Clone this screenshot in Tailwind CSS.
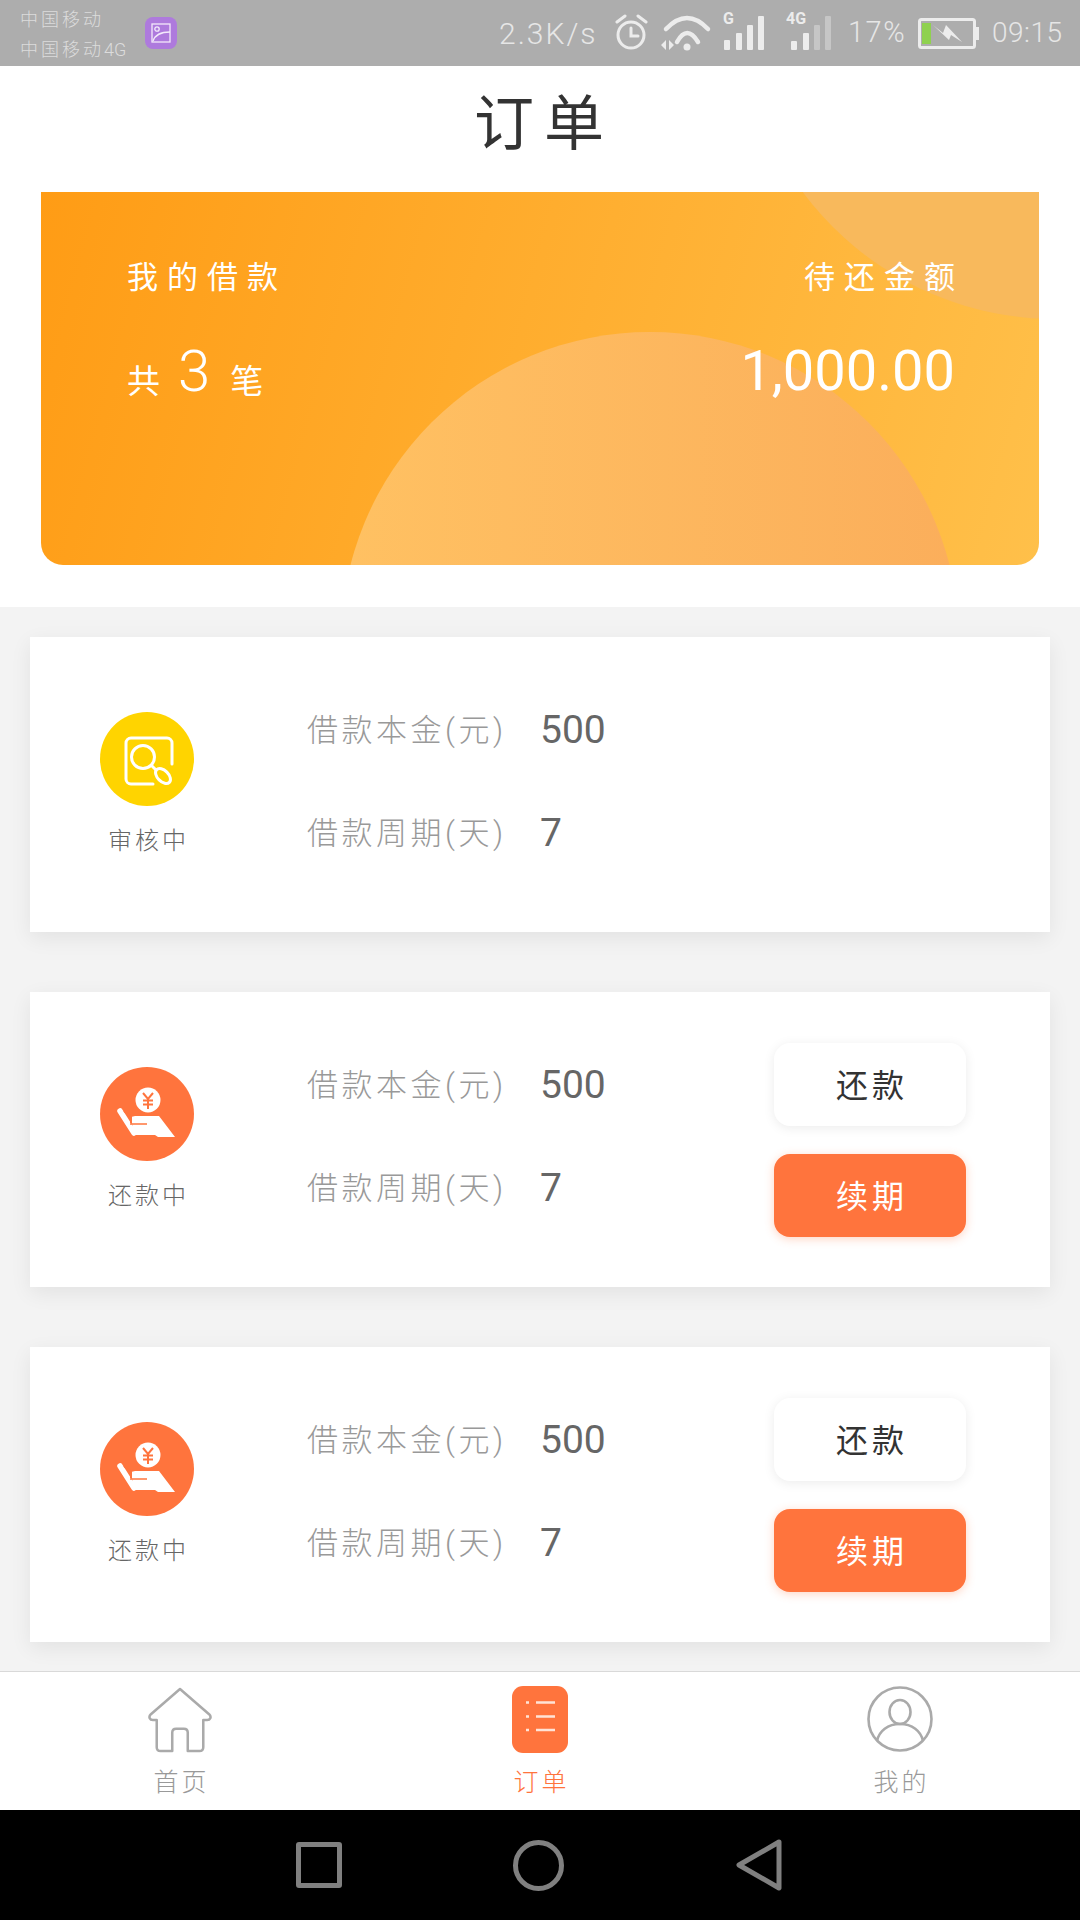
<!DOCTYPE html>
<html lang="zh-CN">

<head>
  <meta charset="UTF-8">
  <meta name="viewport" content="width=device-width, initial-scale=1.0">
  <title>订单</title>
  <script src="https://cdn.jsdelivr.net/npm/@tailwindcss/browser@4"></script>
</head>

<body class="bg-white font-['Roboto','Noto_Sans_CJK_SC',sans-serif] font-light">
  <div class="w-[1080px] h-[1920px] flex flex-col overflow-hidden">

    <!-- status bar -->
    <div class="h-[66px] shrink-0 bg-[#adadad] flex items-center text-[#e6e6e6]">
      <div class="ml-[20px] w-[125px] pt-[3px] text-[18px] tracking-[3px] leading-[30px] text-[#dcdcdc]">
        <div>中国移动</div>
        <div class="whitespace-nowrap">中国移动<span class="tracking-normal">4G</span></div>
      </div>
      <div class="w-[32px] h-[32px] rounded-[8px] bg-[#ae7add] flex items-center justify-center">
        <svg width="20" height="20" viewBox="0 0 20 20" fill="none" stroke="#f3e9fb" stroke-width="1.3">
          <rect x="1" y="1" width="18" height="18" />
          <circle cx="6" cy="6" r="2.2" />
          <path d="M2 18c2-6 7-9 17-9" />
        </svg>
      </div>
      <div class="ml-[322px] w-[116px] text-[30px] tracking-[2px] whitespace-nowrap">2.3K/s</div>
      <svg width="33" height="66" viewBox="0 0 33 66" fill="none" stroke="#ececec" stroke-width="3" stroke-linecap="round">
        <circle cx="16" cy="35" r="13" />
        <path d="M16 28v8h7M2 22l8-6M31 22l-8-6" />
      </svg>
      <svg class="ml-[12px]" width="52" height="66" viewBox="0 0 52 66" fill="none" stroke="#ececec" stroke-width="4.5" stroke-linecap="round">
        <path d="M6 29Q27 7 48 29M17 42Q27 24 38 42" />
        <circle cx="27" cy="47" r="3.5" fill="#ececec" stroke="none" />
        <path d="M1 45l5-5v10zM9 40l5 5-5 5z" fill="#ececec" stroke="none" />
      </svg>
      <svg class="ml-[11px]" width="42" height="66" viewBox="0 0 42 66" fill="#ececec">
        <text x="0" y="24" font-size="16" font-weight="700" font-family="Roboto">G</text>
        <rect x="1" y="40" width="6" height="10" rx="1" />
        <rect x="13" y="33" width="6" height="17" rx="1" />
        <rect x="24" y="25" width="6" height="25" rx="1" />
        <rect x="35" y="16" width="6" height="34" rx="1" />
      </svg>
      <svg class="ml-[21px]" width="46" height="66" viewBox="0 0 46 66" fill="#ececec">
        <text x="0" y="24" font-size="16" font-weight="700" font-family="Roboto">4G</text>
        <rect x="5" y="41" width="6" height="9" rx="1" />
        <rect x="17" y="33" width="6" height="17" rx="1" />
        <rect x="28" y="25" width="6" height="25" rx="1" fill="#c6c6c6" />
        <rect x="39" y="16" width="6" height="34" rx="1" fill="#c6c6c6" />
      </svg>
      <div class="ml-[16px] w-[70px] text-[29px] tracking-[1.5px] whitespace-nowrap">17%</div>
      <svg width="62" height="66" viewBox="0 0 62 66" fill="none">
        <rect x="1.5" y="19.500" width="55" height="28" rx="2" stroke="#ececec" stroke-width="3" />
        <rect x="4" y="23" width="9" height="21" fill="#8fd14f" />
        <path d="M58 27h3v13h-3z" fill="#ececec" />
        <path d="M15 25l10 8 3-8 16 17-11-7-2 5z" fill="#ececec" />
      </svg>
      <div class="ml-[12px] text-[28px] tracking-[0.5px] whitespace-nowrap">09:15</div>
    </div>

    <!-- title -->
    <div class="h-[126px] shrink-0 flex items-center justify-center pb-[8px] pl-[8px] text-[60px] tracking-[10px] text-[#333] font-normal">订单</div>

    <!-- summary card -->
    <div class="shrink-0 px-[41px] pb-[42px] bg-white">
      <div class="relative h-[373px] rounded-b-[22px] overflow-hidden bg-linear-[105deg] from-[#ff9c15] to-[#ffc04a] text-white">
        <div class="absolute left-[700px] top-[-501px] w-[628px] h-[628px] rounded-full bg-[#f8b95c]"></div>
        <div class="absolute left-[300px] top-[140px] w-[618px] h-[640px] rounded-full bg-gradient-to-r from-[#ffc162] to-[#fbae5b]"></div>
        <div class="relative flex justify-between pl-[86px] pr-[84px] pt-[66px]">
          <div>
            <div class="text-[31px] leading-[40px] tracking-[9px] font-normal">我的借款</div>
            <div class="mt-[42px] h-[62px] flex items-end text-[33px] font-normal">
              <span class="leading-[40px]">共</span>
              <span class="ml-[18px] text-[58px] leading-[62px] font-light">3</span>
              <span class="ml-[20px] leading-[40px]">笔</span>
            </div>
          </div>
          <div class="text-right">
            <div class="text-[31px] leading-[40px] tracking-[9px] mr-[-9px] font-normal">待还金额</div>
            <div class="mt-[42px] text-[56px] leading-[62px] font-normal">1,000.00</div>
          </div>
        </div>
      </div>
    </div>

    <!-- order list -->
    <div class="flex-1 bg-[#f3f3f3] px-[30px] pt-[30px] flex flex-col gap-[60px]">
      <div class="h-[295px] bg-white shadow-[0_6px_20px_rgba(0,0,0,0.07)] flex items-center pl-[70px] pr-[84px]">
        <div class="w-[94px] flex flex-col items-center">
          <div class="w-[94px] h-[94px] rounded-full bg-[#ffd400]">
            <svg width="94" height="94" viewBox="0 0 94 94" fill="none" stroke="#fff" stroke-width="3" stroke-linecap="round">
              <path d="M72 52V31a5 5 0 0 0-5-5H31a5 5 0 0 0-5 5v36a5 5 0 0 0 5 5h22" />
              <circle cx="43" cy="45" r="11.500" />
              <path d="M52 54l4 4" />
              <ellipse cx="63" cy="64" rx="9" ry="5.500" transform="rotate(45 63 64)" />
            </svg>
          </div>
          <div class="mt-[18px] pl-[3px] text-[24px] leading-[34px] tracking-[3px] text-[#666] whitespace-nowrap">审核中</div>
        </div>
        <div class="ml-[113px] flex flex-col gap-[63px]">
          <div class="h-[40px] flex items-center">
            <span class="w-[233px] mt-[-4px] text-[31px] tracking-[3.5px] text-[#999] whitespace-nowrap">借款本金(元)</span>
            <span class="text-[39px] text-[#666] font-normal mt-[-6px]">500</span>
          </div>
          <div class="h-[40px] flex items-center">
            <span class="w-[233px] mt-[-4px] text-[31px] tracking-[3.5px] text-[#999] whitespace-nowrap">借款周期(天)</span>
            <span class="text-[39px] text-[#666] font-normal mt-[-6px]">7</span>
          </div>
        </div>
      </div>

      <div class="h-[295px] bg-white shadow-[0_6px_20px_rgba(0,0,0,0.07)] flex items-center pl-[70px] pr-[84px]">
        <div class="w-[94px] flex flex-col items-center">
          <div class="w-[94px] h-[94px] rounded-full bg-[#ff743d]">
            <svg width="94" height="94" viewBox="0 0 94 94">
              <circle cx="48" cy="33" r="12.500" fill="#fff" />
              <path d="M43 26l5 6 5-6M48 32v10M43 33.500h10M43 37.500h10" fill="none" stroke="#ff743d" stroke-width="2" />
              <path d="M20 44l14 22" stroke="#fff" stroke-width="5.500" stroke-linecap="round" />
              <path d="M35 49h24l16 21H58l-3-2H34l-3-18z" fill="#fff" />
              <path d="M30 57h17" stroke="#ff743d" stroke-width="1.500" />
              <path d="M24 44l7 6v6" stroke="#ff743d" stroke-width="2" fill="none" />
            </svg>
          </div>
          <div class="mt-[18px] pl-[3px] text-[24px] leading-[34px] tracking-[3px] text-[#666] whitespace-nowrap">还款中</div>
        </div>
        <div class="ml-[113px] flex flex-col gap-[63px]">
          <div class="h-[40px] flex items-center">
            <span class="w-[233px] mt-[-4px] text-[31px] tracking-[3.5px] text-[#999] whitespace-nowrap">借款本金(元)</span>
            <span class="text-[39px] text-[#666] font-normal mt-[-6px]">500</span>
          </div>
          <div class="h-[40px] flex items-center">
            <span class="w-[233px] mt-[-4px] text-[31px] tracking-[3.5px] text-[#999] whitespace-nowrap">借款周期(天)</span>
            <span class="text-[39px] text-[#666] font-normal mt-[-6px]">7</span>
          </div>
        </div>
        <div class="ml-auto flex flex-col gap-[28px]">
          <div class="w-[192px] h-[83px] pt-[3px] pl-[4px] rounded-[16px] bg-white shadow-[0_2px_12px_rgba(0,0,0,0.08)] flex items-center justify-center text-[32px] tracking-[4px] text-[#333] font-normal">还款</div>
          <div class="w-[192px] h-[83px] pt-[3px] pl-[4px] rounded-[16px] bg-[#ff743d] shadow-[0_2px_10px_rgba(255,116,61,0.3)] flex items-center justify-center text-[32px] tracking-[4px] text-white font-normal">续期</div>
        </div>
      </div>

      <div class="h-[295px] bg-white shadow-[0_6px_20px_rgba(0,0,0,0.07)] flex items-center pl-[70px] pr-[84px]">
        <div class="w-[94px] flex flex-col items-center">
          <div class="w-[94px] h-[94px] rounded-full bg-[#ff743d]">
            <svg width="94" height="94" viewBox="0 0 94 94">
              <circle cx="48" cy="33" r="12.500" fill="#fff" />
              <path d="M43 26l5 6 5-6M48 32v10M43 33.500h10M43 37.500h10" fill="none" stroke="#ff743d" stroke-width="2" />
              <path d="M20 44l14 22" stroke="#fff" stroke-width="5.500" stroke-linecap="round" />
              <path d="M35 49h24l16 21H58l-3-2H34l-3-18z" fill="#fff" />
              <path d="M30 57h17" stroke="#ff743d" stroke-width="1.500" />
              <path d="M24 44l7 6v6" stroke="#ff743d" stroke-width="2" fill="none" />
            </svg>
          </div>
          <div class="mt-[18px] pl-[3px] text-[24px] leading-[34px] tracking-[3px] text-[#666] whitespace-nowrap">还款中</div>
        </div>
        <div class="ml-[113px] flex flex-col gap-[63px]">
          <div class="h-[40px] flex items-center">
            <span class="w-[233px] mt-[-4px] text-[31px] tracking-[3.5px] text-[#999] whitespace-nowrap">借款本金(元)</span>
            <span class="text-[39px] text-[#666] font-normal mt-[-6px]">500</span>
          </div>
          <div class="h-[40px] flex items-center">
            <span class="w-[233px] mt-[-4px] text-[31px] tracking-[3.5px] text-[#999] whitespace-nowrap">借款周期(天)</span>
            <span class="text-[39px] text-[#666] font-normal mt-[-6px]">7</span>
          </div>
        </div>
        <div class="ml-auto flex flex-col gap-[28px]">
          <div class="w-[192px] h-[83px] pt-[3px] pl-[4px] rounded-[16px] bg-white shadow-[0_2px_12px_rgba(0,0,0,0.08)] flex items-center justify-center text-[32px] tracking-[4px] text-[#333] font-normal">还款</div>
          <div class="w-[192px] h-[83px] pt-[3px] pl-[4px] rounded-[16px] bg-[#ff743d] shadow-[0_2px_10px_rgba(255,116,61,0.3)] flex items-center justify-center text-[32px] tracking-[4px] text-white font-normal">续期</div>
        </div>
      </div>
    </div>

    <!-- tab bar -->
    <div class="h-[139px] shrink-0 bg-white border-t border-[#d9d9d9] grid grid-cols-3 text-[25px] tracking-[3px] text-[#999]">
      <div class="flex flex-col items-center pt-[14px]">
        <svg width="64" height="68" viewBox="0 0 66 68" fill="none" stroke="#aaa" stroke-width="2.600" stroke-linejoin="round">
          <path d="M33 2L3 28c-3 3-1 6 2 6h4v28c0 3 2 4 4 4h12V47c0-3 2-4 4-4h8c2 0 4 1 4 4v19h12c2 0 4-1 4-4V34h4c3 0 5-3 2-6z" />
        </svg>
        <div class="mt-[12px] pl-[3px] leading-[34px]">首页</div>
      </div>
      <div class="flex flex-col items-center pt-[14px] text-[#ff743d]">
        <div class="w-[56px] h-[67px] rounded-[11px] bg-[#ff743d]">
          <svg width="56" height="67" viewBox="0 0 56 67" fill="none" stroke="#ffe3d6" stroke-width="2.600">
            <path d="M14 16.500h3M14 30.500h3M14 44h3M24 16.500h19M24 30.500h19M24 44h19" />
          </svg>
        </div>
        <div class="mt-[13px] pl-[3px] leading-[34px]">订单</div>
      </div>
      <div class="flex flex-col items-center pt-[13px]">
        <svg width="66" height="68" viewBox="0 0 66 68" fill="none" stroke="#aaa" stroke-width="2.600">
          <circle cx="33" cy="34" r="31.500" />
          <ellipse cx="33" cy="27" rx="10.500" ry="12" />
          <path d="M10 56c2-10 11-17 23-17s21 7 23 17" />
        </svg>
        <div class="mt-[13px] pl-[3px] leading-[34px]">我的</div>
      </div>
    </div>

    <!-- system nav -->
    <div class="h-[110px] shrink-0 bg-black flex items-center justify-center pr-[3px]">
      <div class="w-[46px] h-[46px] rounded-[3px] border-[5px] border-[#808080]"></div>
      <div class="ml-[171px] w-[51px] h-[51px] rounded-full border-[5px] border-[#808080]"></div>
      <svg class="ml-[172px]" width="46" height="52" viewBox="0 0 46 52" fill="none" stroke="#808080" stroke-width="5" stroke-linejoin="round">
        <path d="M43 3L3 26l40 23z" />
      </svg>
    </div>
  </div>
</body>

</html>
